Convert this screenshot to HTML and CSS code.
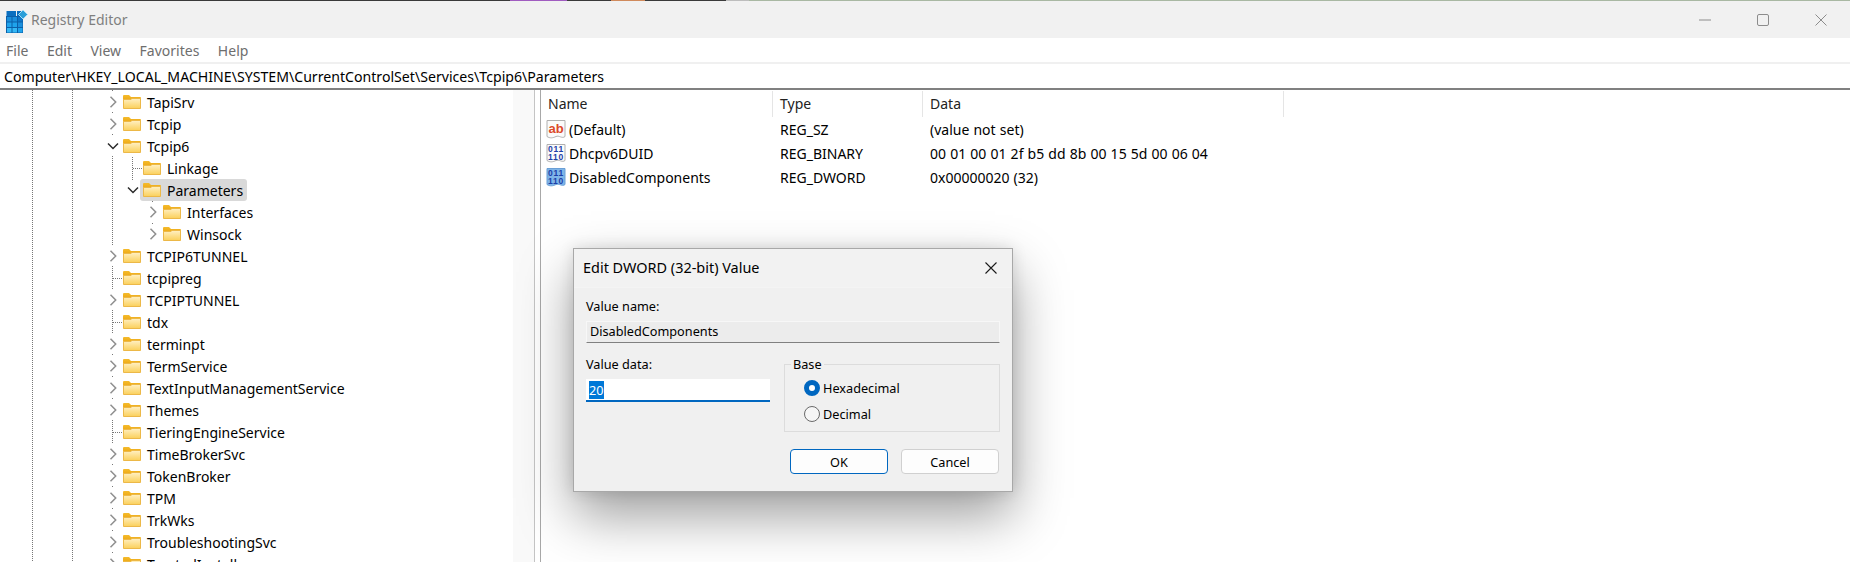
FILE: index.html
```html
<!DOCTYPE html>
<html lang="en">
<head>
  <meta charset="UTF-8" />
  <title>Registry Editor</title>
  <link rel="stylesheet" href="styles.css">
</head>
<body>
  <svg class="defs" width="0" height="0" aria-hidden="true">
    <defs>
      <linearGradient id="folderFill" x1="0" y1="0" x2="0" y2="1">
        <stop offset="0" stop-color="#fff0c4" />
        <stop offset="1" stop-color="#fbd05a" />
      </linearGradient>
      <linearGradient id="folderTab" x1="0" y1="0" x2="0" y2="1">
        <stop offset="0" stop-color="#f5bb2c" />
        <stop offset="1" stop-color="#eda916" />
      </linearGradient>
    </defs>
    <symbol id="folder" viewBox="0 0 18 14">
      <path d="M0 1a1 1 0 0 1 1-1h5l2 2h9a1 1 0 0 1 1 1v2H0z" fill="url(#folderTab)" />
      <path d="M.5 4.5H8l1-1h8.500v10H.5z" fill="url(#folderFill)" stroke="#ecb848" />
    </symbol>
    <symbol id="closed" viewBox="0 0 8 12">
      <path d="M1.500 .8 6.700 6 1.500 11.200" fill="none" stroke="#8f8f8f" stroke-width="1.500" />
    </symbol>
    <symbol id="open" viewBox="0 0 12 8">
      <path d="M1 1.500 6 6.500 11 1.500" fill="none" stroke="#2b2b2b" stroke-width="1.500" />
    </symbol>
    <symbol id="paper" viewBox="0 0 20 21">
      <path d="M1 1.500h18v16c-3 2.500-6-1.500-9 0s-6 2-9 0z" fill="#fbfbfb" stroke="#b0b0b0" />
    </symbol>
    <symbol id="paper-on" viewBox="0 0 20 21">
      <path d="M1 1.500h18v16c-3 2.500-6-1.500-9 0s-6 2-9 0z" fill="#7fb5e8" stroke="#6a9fd6" />
    </symbol>
  </svg>

  <div class="window">
    <div class="strip">
      <span class="strip-dark s1"></span>
      <span class="strip-purple"></span>
      <span class="strip-dark s2"></span>
      <span class="strip-orange"></span>
      <span class="strip-dark s3"></span>
      <span class="strip-grey"></span>
      <span class="strip-green"></span>
    </div>

    <header class="titlebar">
      <svg class="app-icon" width="24" height="24" viewBox="0 0 24 24">
        <rect x="5" y="1" width="5" height="5" fill="#0a6fc0" />
        <rect x="11" y="1" width="5" height="5" fill="#0a6fc0" />
        <rect x="0" y="6" width="17" height="17" fill="#0b5fa8" />
        <rect x="0.500" y="1" width="5" height="5" fill="#0a6fc0" />
        <rect x="1" y="7" width="4.500" height="4.500" fill="#1a8fdc" />
        <rect x="6.500" y="7" width="4.500" height="4.500" fill="#1a8fdc" />
        <rect x="12" y="7" width="4.500" height="4.500" fill="#0e76c8" />
        <rect x="1" y="12.500" width="4.500" height="4.500" fill="#1fa3ec" />
        <rect x="6.500" y="12.500" width="4.500" height="4.500" fill="#1fa3ec" />
        <rect x="12" y="12.500" width="4.500" height="4.500" fill="#1a8fdc" />
        <rect x="1" y="18" width="4.500" height="4.500" fill="#35b8f5" />
        <rect x="6.500" y="18" width="4.500" height="4.500" fill="#35b8f5" />
        <rect x="12" y="18" width="4.500" height="4.500" fill="#1fa3ec" />
        <path d="M17 0l4.500 4.500L17 9l-4.500-4.500z" fill="#2a9ed8" stroke="#a8dcf5" />
      </svg>
      <span class="app-title">Registry Editor</span>
      <div class="caption-buttons">
        <svg width="12" height="12" viewBox="0 0 12 12"><path d="M0 6h12" stroke="#8c8c8c" /></svg>
        <svg width="12" height="12" viewBox="0 0 12 12"><rect x=".5" y=".5" width="11" height="11" rx="1.500" fill="none" stroke="#8c8c8c" /></svg>
        <svg width="12" height="12" viewBox="0 0 12 12"><path d="M.5 .5l11 11M11.500 .5l-11 11" stroke="#8c8c8c" /></svg>
      </div>
    </header>

    <nav class="menu">
      <span>File</span>
      <span>Edit</span>
      <span>View</span>
      <span>Favorites</span>
      <span>Help</span>
    </nav>

    <div class="address">Computer\HKEY_LOCAL_MACHINE\SYSTEM\CurrentControlSet\Services\Tcpip6\Parameters</div>

    <div class="panes">
      <div class="tree-pane">
        <ul class="tree">
          <li class="row"><span class="exp"><svg width="8" height="12"><use href="#closed" /></svg></span><span class="node"><svg class="folder"><use href="#folder" /></svg>TapiSrv</span></li>
          <li class="row"><span class="exp"><svg width="8" height="12"><use href="#closed" /></svg></span><span class="node"><svg class="folder"><use href="#folder" /></svg>Tcpip</span></li>
          <li class="row"><span class="exp"><svg width="12" height="8"><use href="#open" /></svg></span><span class="node"><svg class="folder"><use href="#folder" /></svg>Tcpip6</span></li>
          <li class="row l1"><span class="exp leaf"></span><span class="node"><svg class="folder"><use href="#folder" /></svg>Linkage</span></li>
          <li class="row l1 last"><span class="exp"><svg width="12" height="8"><use href="#open" /></svg></span><span class="node selected"><svg class="folder"><use href="#folder" /></svg>Parameters</span></li>
          <li class="row l2"><span class="exp"><svg width="8" height="12"><use href="#closed" /></svg></span><span class="node"><svg class="folder"><use href="#folder" /></svg>Interfaces</span></li>
          <li class="row l2"><span class="exp"><svg width="8" height="12"><use href="#closed" /></svg></span><span class="node"><svg class="folder"><use href="#folder" /></svg>Winsock</span></li>
          <li class="row"><span class="exp"><svg width="8" height="12"><use href="#closed" /></svg></span><span class="node"><svg class="folder"><use href="#folder" /></svg>TCPIP6TUNNEL</span></li>
          <li class="row"><span class="exp leaf"></span><span class="node"><svg class="folder"><use href="#folder" /></svg>tcpipreg</span></li>
          <li class="row"><span class="exp"><svg width="8" height="12"><use href="#closed" /></svg></span><span class="node"><svg class="folder"><use href="#folder" /></svg>TCPIPTUNNEL</span></li>
          <li class="row"><span class="exp leaf"></span><span class="node"><svg class="folder"><use href="#folder" /></svg>tdx</span></li>
          <li class="row"><span class="exp"><svg width="8" height="12"><use href="#closed" /></svg></span><span class="node"><svg class="folder"><use href="#folder" /></svg>terminpt</span></li>
          <li class="row"><span class="exp"><svg width="8" height="12"><use href="#closed" /></svg></span><span class="node"><svg class="folder"><use href="#folder" /></svg>TermService</span></li>
          <li class="row"><span class="exp"><svg width="8" height="12"><use href="#closed" /></svg></span><span class="node"><svg class="folder"><use href="#folder" /></svg>TextInputManagementService</span></li>
          <li class="row"><span class="exp"><svg width="8" height="12"><use href="#closed" /></svg></span><span class="node"><svg class="folder"><use href="#folder" /></svg>Themes</span></li>
          <li class="row"><span class="exp leaf"></span><span class="node"><svg class="folder"><use href="#folder" /></svg>TieringEngineService</span></li>
          <li class="row"><span class="exp"><svg width="8" height="12"><use href="#closed" /></svg></span><span class="node"><svg class="folder"><use href="#folder" /></svg>TimeBrokerSvc</span></li>
          <li class="row"><span class="exp"><svg width="8" height="12"><use href="#closed" /></svg></span><span class="node"><svg class="folder"><use href="#folder" /></svg>TokenBroker</span></li>
          <li class="row"><span class="exp"><svg width="8" height="12"><use href="#closed" /></svg></span><span class="node"><svg class="folder"><use href="#folder" /></svg>TPM</span></li>
          <li class="row"><span class="exp"><svg width="8" height="12"><use href="#closed" /></svg></span><span class="node"><svg class="folder"><use href="#folder" /></svg>TrkWks</span></li>
          <li class="row"><span class="exp"><svg width="8" height="12"><use href="#closed" /></svg></span><span class="node"><svg class="folder"><use href="#folder" /></svg>TroubleshootingSvc</span></li>
          <li class="row"><span class="exp"><svg width="8" height="12"><use href="#closed" /></svg></span><span class="node"><svg class="folder"><use href="#folder" /></svg>TrustedInstaller</span></li>
        </ul>
        <div class="tree-track"></div>
      </div>

      <div class="values">
        <div class="value-head">
          <span>Name</span>
          <span>Type</span>
          <span>Data</span>
        </div>
        <div class="value-row">
          <span class="value-name">
            <svg class="reg-icon" viewBox="0 0 20 21">
              <use href="#paper" />
              <text x="10" y="13.500" class="ab">ab</text>
            </svg>(Default)</span>
          <span>REG_SZ</span>
          <span class="value-data">(value not set)</span>
        </div>
        <div class="value-row">
          <span class="value-name">
            <svg class="reg-icon" viewBox="0 0 20 21">
              <use href="#paper" />
              <text x="10" y="9" class="bits">011</text>
              <text x="10" y="16.500" class="bits">110</text>
            </svg>Dhcpv6DUID</span>
          <span>REG_BINARY</span>
          <span class="value-data">00 01 00 01 2f b5 dd 8b 00 15 5d 00 06 04</span>
        </div>
        <div class="value-row">
          <span class="value-name">
            <svg class="reg-icon" viewBox="0 0 20 21">
              <use href="#paper-on" />
              <text x="10" y="9" class="bits">011</text>
              <text x="10" y="16.500" class="bits">110</text>
            </svg>DisabledComponents</span>
          <span>REG_DWORD</span>
          <span class="value-data">0x00000020 (32)</span>
        </div>
      </div>
    </div>
  </div>

  <div class="dialog">
    <div class="dialog-title">
      <span>Edit DWORD (32-bit) Value</span>
      <svg width="12" height="12" viewBox="0 0 12 12"><path d="M.5 .5l11 11M11.500 .5l-11 11" stroke="#1a1a1a" stroke-width="1.100" /></svg>
    </div>
    <div class="dialog-body">
      <div class="field-label">Value name:</div>
      <div class="name-box">DisabledComponents</div>
      <div class="dialog-cols">
        <div>
          <div class="field-label data-label">Value data:</div>
          <div class="data-box"><span class="sel">20</span></div>
        </div>
        <fieldset class="base">
          <legend>Base</legend>
          <div class="radio-row"><span class="radio checked"></span>Hexadecimal</div>
          <div class="radio-row"><span class="radio"></span>Decimal</div>
        </fieldset>
      </div>
      <div class="dialog-buttons">
        <button type="button" class="btn primary">OK</button>
        <button type="button" class="btn">Cancel</button>
      </div>
    </div>
  </div>
</body>
</html>
```

FILE: styles.css
```css
:root {
  --ui-font: "Noto Sans", "Open Sans", Arial, sans-serif;
  --chrome: #f1f1f1;
  --accent: #0067c0;
}
html, body {
  margin: 0;
  height: 100%;
  overflow: hidden;
}
body {
  font-family: var(--ui-font);
  font-size: 14px;
  color: #000;
  background: #fff;
}
.defs {
  position: absolute;
}
.window {
  display: flex;
  flex-direction: column;
  height: 562px;
}

/* sliver of whatever is behind the window */
.strip {
  display: flex;
  height: 1px;
  flex: none;
}
.strip-dark { background: #3a3a3a; }
.s1 { width: 510px; }
.s2 { width: 44px; }
.s3 { width: 81px; }
.strip-purple { width: 57px; background: #a05cc0; }
.strip-orange { width: 34px; background: #d08a5c; }
.strip-grey { width: 23px; background: #bdbdbd; }
.strip-green { flex: 1; background: #a9b8a3; }

.titlebar {
  display: flex;
  align-items: center;
  height: 37px;
  flex: none;
  padding: 0 23px 0 6px;
  background: var(--chrome);
}
.app-icon {
  margin-top: 5px;
  margin-right: 1px;
  width: 24px;
  height: 24px;
}
.app-title {
  color: #7f7f7f;
  font-size: 14px;
}
.caption-buttons {
  display: flex;
  align-items: center;
  gap: 46px;
  margin-left: auto;
}
.menu {
  display: flex;
  align-items: center;
  gap: 18.500px;
  height: 24px;
  flex: none;
  padding-left: 6px;
  color: #6e6e6e;
  font-size: 14px;
}
.address {
  height: 24px;
  line-height: 25px;
  flex: none;
  padding-left: 4px;
  border-top: 2px solid #f0f0f0;
  border-bottom: 2px solid #808080;
  color: #000;
  font-size: 14.140px;
  white-space: nowrap;
}

.panes {
  display: flex;
  flex: 1;
  min-height: 0;
}
.tree-pane {
  display: flex;
  width: 534px;
  flex: none;
  overflow: hidden;
  border-right: 1px solid #c4c4c4;
}
.tree {
  flex: 1;
  margin: 0;
  padding: 1px 0 0;
  list-style: none;
  background-image:
    repeating-linear-gradient(#777 0 1px, transparent 1px 2px),
    repeating-linear-gradient(#777 0 1px, transparent 1px 2px),
    repeating-linear-gradient(#777 0 1px, transparent 1px 2px);
  background-size: 1px 100%;
  background-position: 32px 0, 72px 0, 112px 0;
  background-repeat: no-repeat;
}
.tree-track {
  width: 21px;
  flex: none;
  background: #f9f9f9;
}
.row {
  display: flex;
  align-items: center;
  height: 22px;
  padding-left: 103px;
  white-space: nowrap;
}
.row.l1 {
  padding-left: 123px;
  background: repeating-linear-gradient(#777 0 1px, transparent 1px 2px) 132px 0 / 1px 100% no-repeat;
}
.row.l2 {
  padding-left: 143px;
  background: repeating-linear-gradient(#777 0 1px, transparent 1px 2px) 152px 0 / 1px 100% no-repeat;
}
.exp {
  display: flex;
  align-items: center;
  justify-content: center;
  width: 20px;
  height: 20px;
  flex: none;
  background: #fff;
}
.exp.leaf {
  height: 1px;
  margin-left: 10px;
  width: 10px;
  background: repeating-linear-gradient(90deg, #777 0 1px, transparent 1px 2px);
}
.node {
  display: flex;
  align-items: center;
  height: 22px;
}
.folder {
  width: 18px;
  height: 14px;
  margin-right: 6px;
  flex: none;
}
.node.selected {
  margin-left: -3px;
  padding: 0 4px 0 3px;
  border-radius: 3px;
  background: #d9d9d9;
}

.values {
  flex: 1;
  margin-left: 5px;
  border-left: 1px solid #a8a8a8;
}
.value-head, .value-row {
  display: grid;
  grid-template-columns: 232px 150px 361px;
}
.value-head {
  height: 26px;
  margin-top: 1px;
  line-height: 26px;
  color: #222;
}
.value-head span {
  padding-left: 7px;
  border-right: 1px solid #e5e5e5;
}
.value-row {
  align-items: center;
  height: 24px;
}
.value-row span {
  padding-left: 7px;
  white-space: nowrap;
}
.value-row .value-name {
  display: flex;
  align-items: center;
  padding-left: 5px;
}
.value-row .value-data {
  word-spacing: .5px;
}
.reg-icon {
  width: 20px;
  height: 21px;
  margin-right: 3px;
  flex: none;
}
.ab {
  font: bold 13px "Liberation Sans", Arial, sans-serif;
  fill: #dc4a2a;
  text-anchor: middle;
}
.bits {
  font: bold 8.500px "Liberation Sans", Arial, sans-serif;
  fill: #1c3fa8;
  text-anchor: middle;
  letter-spacing: .8px;
}

/* dialog floats over the main window */
.dialog {
  position: absolute;
  left: 573px;
  top: 248px;
  width: 440px;
  height: 244px;
  box-sizing: border-box;
  border: 1px solid #a8a8a8;
  background: #f0f0f0;
  font-size: 12.700px;
  box-shadow: 0 24px 50px rgba(0, 0, 0, .38), 0 0 14px rgba(0, 0, 0, .12);
}
.dialog-title {
  display: flex;
  align-items: center;
  justify-content: space-between;
  height: 38px;
  padding: 0 15px 0 9px;
  border-bottom: 1px solid #f4f4f4;
  background: #f2f2f2;
  font-size: 14.450px;
}
.dialog-title span {
  margin-top: -1px;
}
.dialog-body {
  padding: 9px 12px 0;
}
.field-label {
  height: 20px;
  line-height: 19px;
}
.data-label {
  line-height: 21px;
}
.name-box {
  box-sizing: border-box;
  height: 22px;
  margin-top: 4px;
  padding-left: 3px;
  line-height: 19px;
  border: 1px solid #f7f7f7;
  border-bottom-color: #808080;
  background: #ececec;
}
.dialog-cols {
  display: grid;
  grid-template-columns: 184px 216px;
  gap: 14px;
  margin-top: 11px;
}
.data-box {
  box-sizing: border-box;
  height: 23px;
  margin-top: 5px;
  padding: 2px 0 0 3px;
  border-bottom: 2px solid var(--accent);
  background: #fff;
  line-height: 18px;
}
.sel {
  display: inline-block;
  background: #0078d7;
  color: #fff;
}
.base {
  box-sizing: border-box;
  height: 78px;
  margin: 0;
  padding: 0;
  border: 1px solid #dcdcdc;
}
.base legend {
  margin-left: 6px;
  padding: 0 2px;
  height: 20px;
  line-height: 20px;
}
.radio-row {
  display: flex;
  align-items: center;
  gap: 3px;
  height: 20px;
  margin: 4px 0 6px 19px;
}
.radio {
  box-sizing: border-box;
  width: 16px;
  height: 16px;
  border: 1px solid #6a6a6a;
  border-radius: 50%;
  background: #f6f6f6;
}
.radio.checked {
  border: 5px solid var(--accent);
  background: #fff;
}
.dialog-buttons {
  display: flex;
  justify-content: flex-end;
  gap: 13px;
  margin: 17px 1px 0 0;
}
.btn {
  box-sizing: border-box;
  width: 98px;
  height: 25px;
  padding: 0;
  border: 1px solid #d0d0d0;
  border-radius: 4px;
  background: #fdfdfd;
  color: #000;
  font-family: var(--ui-font);
  font-size: 12.700px;
}
.btn.primary {
  border-color: var(--accent);
}
```
